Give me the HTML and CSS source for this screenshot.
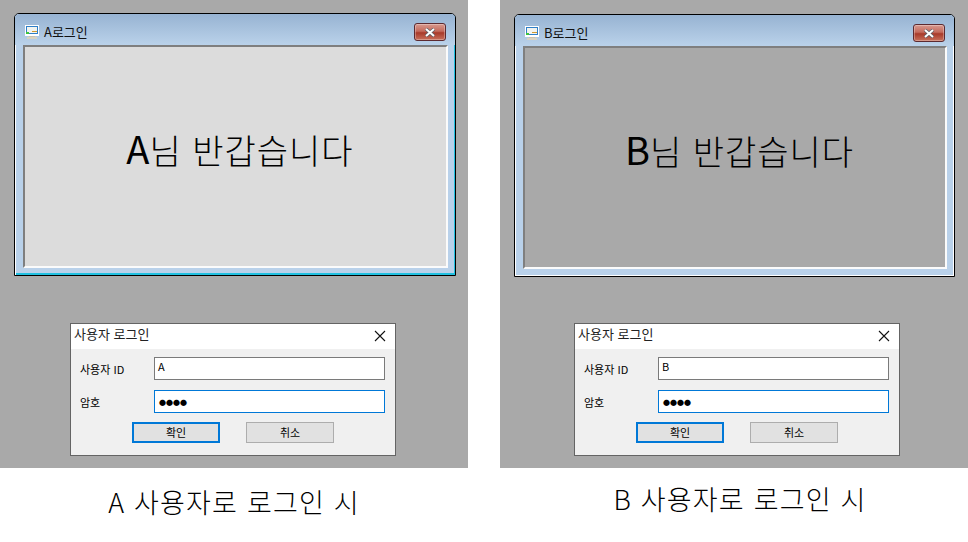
FILE: index.html
```html
<!DOCTYPE html>
<html lang="ko">

<head>
    <meta charset="UTF-8" />
    <title>사용자 로그인</title>
    <link rel="stylesheet" href="styles.css">
</head>

<body>
    <div class="columns">
        <section class="case case-a">
            <div class="panel">
                <div class="window">
                    <div class="window-title">
                        <svg class="app-icon" width="16" height="16" viewBox="0 0 16 16">
                            <rect x="1" y="1" width="14" height="11" fill="#fff" />
                            <rect x="2" y="2" width="12" height="8" fill="#2f7fc8" />
                            <rect x="3" y="3" width="10" height="6" fill="#f2f4f0" />
                            <rect x="2" y="8" width="3" height="2" fill="#3fc43f" />
                            <rect x="8" y="7" width="5" height="1" fill="#d09a30" />
                            <rect x="5" y="12" width="6" height="1" fill="#c8c2b0" />
                            <rect x="3" y="13" width="10" height="2" fill="#d8d2c0" />
                        </svg>
                        <span class="window-name">A로그인</span>
                        <div class="close-red">
                            <svg width="14" height="9" viewBox="0 0 14 9">
                                <path d="M3 1 L11 8 M11 1 L3 8" stroke="#5b5f68" stroke-width="3.4" />
                                <path d="M3 1 L11 8 M11 1 L3 8" stroke="#fff" stroke-width="2" />
                            </svg>
                        </div>
                    </div>
                    <div class="client">
                        <p class="welcome"><span class="welcome-id">A</span>님 반갑습니다</p>
                    </div>
                </div>

                <div class="dialog">
                    <div class="dialog-title">
                        <span>사용자 로그인</span>
                        <svg width="12" height="12" viewBox="0 0 12 12">
                            <path d="M1 1 L11 11 M11 1 L1 11" stroke="#111" stroke-width="1.1" fill="none" />
                        </svg>
                    </div>
                    <div class="dialog-body">
                        <div class="field">
                            <label>사용자 ID</label>
                            <div class="input">A</div>
                        </div>
                        <div class="field">
                            <label>암호</label>
                            <div class="input input-focus">●●●●</div>
                        </div>
                        <div class="buttons">
                            <div class="btn btn-default">확인</div>
                            <div class="btn">취소</div>
                        </div>
                    </div>
                </div>
            </div>
            <p class="caption">A 사용자로 로그인 시</p>
        </section>

        <section class="case case-b">
            <div class="panel">
                <div class="window">
                    <div class="window-title">
                        <svg class="app-icon" width="16" height="16" viewBox="0 0 16 16">
                            <rect x="1" y="1" width="14" height="11" fill="#fff" />
                            <rect x="2" y="2" width="12" height="8" fill="#2f7fc8" />
                            <rect x="3" y="3" width="10" height="6" fill="#f2f4f0" />
                            <rect x="2" y="8" width="3" height="2" fill="#3fc43f" />
                            <rect x="8" y="7" width="5" height="1" fill="#d09a30" />
                            <rect x="5" y="12" width="6" height="1" fill="#c8c2b0" />
                            <rect x="3" y="13" width="10" height="2" fill="#d8d2c0" />
                        </svg>
                        <span class="window-name">B로그인</span>
                        <div class="close-red">
                            <svg width="14" height="9" viewBox="0 0 14 9">
                                <path d="M3 1 L11 8 M11 1 L3 8" stroke="#5b5f68" stroke-width="3.4" />
                                <path d="M3 1 L11 8 M11 1 L3 8" stroke="#fff" stroke-width="2" />
                            </svg>
                        </div>
                    </div>
                    <div class="client">
                        <p class="welcome"><span class="welcome-id">B</span>님 반갑습니다</p>
                    </div>
                </div>

                <div class="dialog">
                    <div class="dialog-title">
                        <span>사용자 로그인</span>
                        <svg width="12" height="12" viewBox="0 0 12 12">
                            <path d="M1 1 L11 11 M11 1 L1 11" stroke="#111" stroke-width="1.1" fill="none" />
                        </svg>
                    </div>
                    <div class="dialog-body">
                        <div class="field">
                            <label>사용자 ID</label>
                            <div class="input">B</div>
                        </div>
                        <div class="field">
                            <label>암호</label>
                            <div class="input input-focus">●●●●</div>
                        </div>
                        <div class="buttons">
                            <div class="btn btn-default">확인</div>
                            <div class="btn">취소</div>
                        </div>
                    </div>
                </div>
            </div>
            <p class="caption">B 사용자로 로그인 시</p>
        </section>
    </div>
</body>

</html>
```

FILE: styles.css
```css
body {
    margin: 0;
    background: #fff;
    color: #000;
    font-family: "Noto Sans CJK KR", "Liberation Sans", sans-serif;
}

.columns {
    display: flex;
    justify-content: space-between;
    width: 968px;
}

.case {
    width: 468px;
}

.panel {
    box-sizing: border-box;
    height: 468px;
    background: #a9a9a9;
    padding-top: 13px;
}

.case-b .panel {
    padding-top: 14px;
}

/* Aero window */
.window {
    box-sizing: border-box;
    width: 442px;
    height: 263px;
    margin-left: 14px;
    border: 1px solid #000;
    border-radius: 5px 5px 0 0;
    box-shadow: inset 1px 1px 0 #fff, inset -1px -2px 0 #20c0e0;
    background: #b9d1ea;
    padding: 0 7px 7px 8px;
    display: flex;
    flex-direction: column;
}

.case-b .window {
    width: 441px;
    box-shadow: inset 1px 1px 0 #fff, inset -1px -1px 0 #fff;
}

.window-title {
    box-sizing: border-box;
    height: 31px;
    flex: none;
    display: flex;
    align-items: center;
    margin: 0 -7px 0 -8px;
    padding: 5px 9px 0 9px;
    border-radius: 4px 4px 0 0;
    background: linear-gradient(to bottom, #97b3d2, #bad2ea);
}

.app-icon {
    flex: none;
}

.window-name {
    margin: 0 0 2px 4px;
    font-size: 13px;
    color: #111;
}

.close-red {
    box-sizing: border-box;
    margin-left: auto;
    width: 32px;
    height: 18px;
    border: 1px solid #5c2a30;
    border-radius: 3px;
    background: linear-gradient(to bottom, #d89a90 0%, #c46a5c 45%, #a83a2a 55%, #c8705c 100%);
    box-shadow: inset 0 0 0 1px rgba(255, 255, 255, 0.3);
    display: flex;
    align-items: center;
    justify-content: center;
}

.client {
    flex: 1;
    background: #dcdcdc;
    border-top: 2px solid #7f7f7f;
    border-left: 2px solid #7f7f7f;
    border-right: 2px solid #fbfbfb;
    border-bottom: 2px solid #fbfbfb;
    display: flex;
    align-items: center;
    justify-content: center;
}

.case-b .client {
    background: #a9a9a9;
}

.welcome {
    margin: 0 0 16px 9px;
    font-size: 34px;
    font-weight: 300;
    line-height: 46px;
    letter-spacing: 1px;
}

.welcome-id {
    font-size: 38px;
    font-weight: 400;
    letter-spacing: 0;
}

/* Login dialog */
.dialog {
    box-sizing: border-box;
    width: 326px;
    height: 133px;
    margin: 47px 0 0 70px;
    border: 1px solid #646464;
    background: #f0f0f0;
    font-size: 11px;
}

.case-b .dialog {
    margin: 46px 0 0 74px;
}

.dialog-title {
    height: 25px;
    box-sizing: border-box;
    background: #fff;
    padding: 0 9px 6px 3px;
    display: flex;
    align-items: center;
    justify-content: space-between;
    font-size: 13px;
    color: #222;
}

.dialog-title svg {
    margin-top: 5px;
}

.dialog-body {
    padding: 8px 10px 0 9px;
}

.field {
    display: flex;
    align-items: center;
    justify-content: space-between;
    margin-bottom: 10px;
}

.input {
    box-sizing: border-box;
    width: 231px;
    height: 23px;
    border: 1px solid #7a7a7a;
    background: #fff;
    padding: 0 3px 5px;
    display: flex;
    align-items: center;
    font-size: 11px;
}

.input-focus {
    border-color: #0078d7;
    padding: 0 4px;
    font-size: 7px;
}

.buttons {
    display: flex;
    gap: 26px;
    margin: -1px 0 0 52px;
}

.btn {
    box-sizing: border-box;
    width: 88px;
    height: 21px;
    border: 1px solid #adadad;
    background: #e1e1e1;
    display: flex;
    align-items: center;
    justify-content: center;
    padding-bottom: 2px;
}

.btn-default {
    border: 2px solid #0078d7;
}

/* Text under each panel */
.caption {
    margin: 12px 0 0;
    text-align: center;
    font-size: 27px;
    font-weight: 300;
    line-height: 44px;
    letter-spacing: 1.2px;
}

.case-b .caption {
    margin-top: 9px;
    padding-left: 12px;
    box-sizing: border-box;
    width: 468px;
}
```
